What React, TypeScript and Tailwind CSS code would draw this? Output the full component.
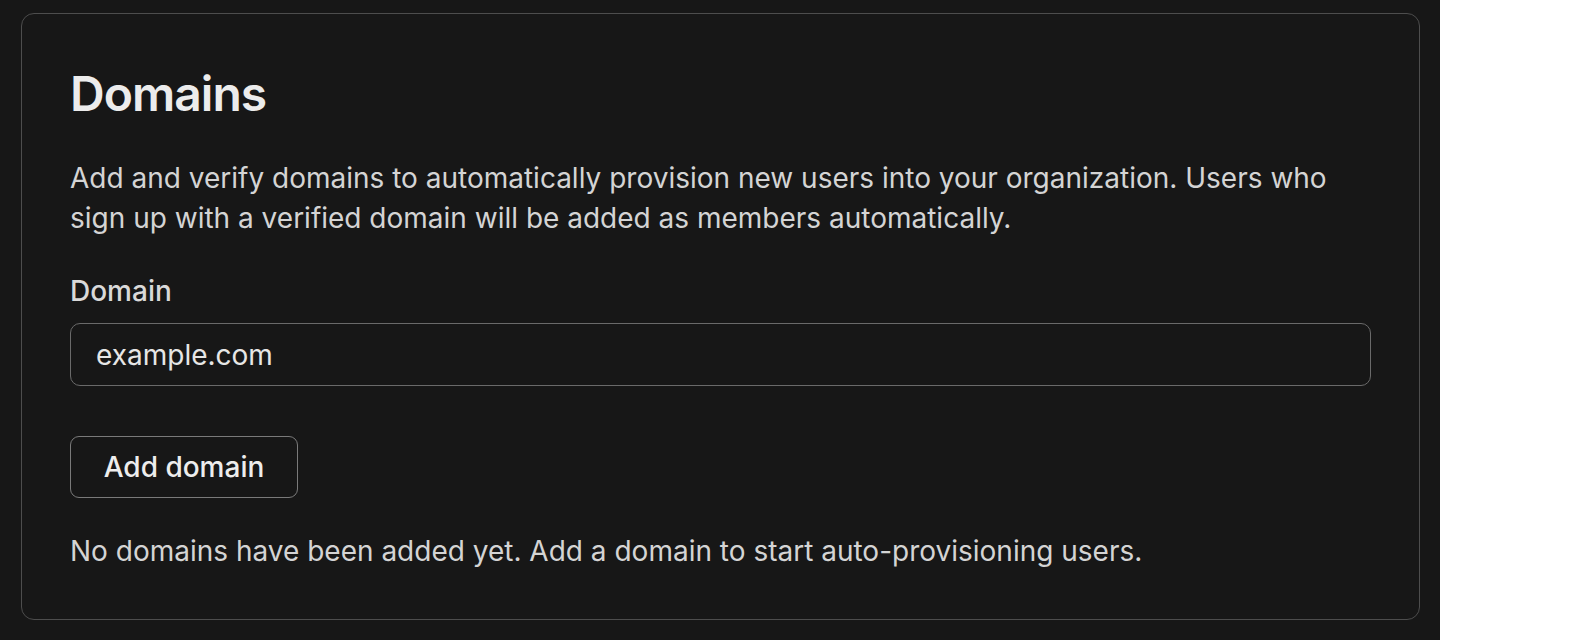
export default function App() {
  return (
    <div className="flex h-[640px] w-[1592px] bg-white font-['Inter',sans-serif]">
      <div className="h-full w-[1440px] bg-[#171717] pl-[21px] pr-[20px] pt-[13px] pb-[20px]">
        <section className="rounded-[13px] border border-[#4d4d4d] bg-[#171717] px-[48px] pt-[48px] pb-[48px]">
          <h1 className="text-[48px] leading-[64px] font-semibold tracking-[-0.02em] text-[#ececec]">
            Domains
          </h1>
          <p className="mt-[32px] text-[28px] leading-[40px] text-[#d4d4d4]">
            Add and verify domains to automatically provision new users into your organization. Users who
            sign up with a verified domain will be added as members automatically.
          </p>
          <label className="mt-[33px] block text-[28px] leading-[40px] font-medium text-[#d9d9d9]">
            Domain
          </label>
          <div className="mt-[12px] flex h-[63px] items-center rounded-[10px] border border-[#6a6a6a] px-[25px] text-[28px] text-[#e6e6e6]">
            example.com
          </div>
          <button
            type="button"
            className="mt-[50px] flex h-[62px] w-[228px] items-center justify-center rounded-[9px] border border-[#7a7a7a] text-[28px] font-medium text-[#ededed]"
          >
            Add domain
          </button>
          <p className="mt-[33px] text-[28px] leading-[40px] text-[#d4d4d4]">
            No domains have been added yet. Add a domain to start auto-provisioning users.
          </p>
        </section>
      </div>
      <div className="flex-1 bg-white" />
    </div>
  );
}
